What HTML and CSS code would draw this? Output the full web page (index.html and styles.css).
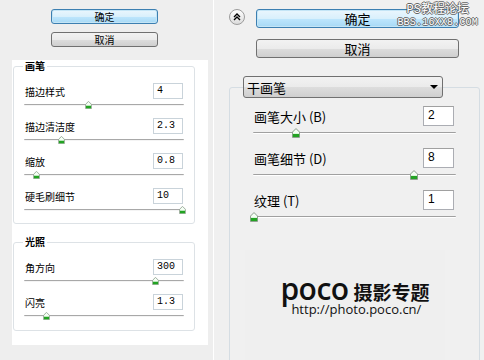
FILE: index.html
```html
<!DOCTYPE html>
<html lang="zh-CN">
<head>
    <meta charset="UTF-8">
    <title>干画笔</title>
    <link rel="stylesheet" href="styles.css">
</head>
<body>
    <svg width="0" height="0" class="defs">
        <symbol id="thumb" viewBox="0 0 9 11">
            <path d="M4.5 0.5 L8.5 4.5 V10.5 H0.5 V4.5 Z" fill="#f4fff4" stroke="#7d8f7d"/>
            <rect x="1" y="6.5" width="7" height="3.5" fill="#22a322"/>
        </symbol>
    </svg>

    <div class="left">
        <div class="btns">
            <div class="btn btn-sm btn-default">确定</div>
            <div class="btn btn-sm">取消</div>
        </div>
        <div class="sheet">
            <fieldset class="lgroup">
                <legend>画笔</legend>
                <div class="row">
                    <div class="line"><span>描边样式</span><span class="field">4</span></div>
                    <div class="slider"><svg class="knob" style="left: 40%"><use href="#thumb"/></svg></div>
                </div>
                <div class="row">
                    <div class="line"><span>描边清洁度</span><span class="field">2.3</span></div>
                    <div class="slider"><svg class="knob" style="left: 23%"><use href="#thumb"/></svg></div>
                </div>
                <div class="row">
                    <div class="line"><span>缩放</span><span class="field">0.8</span></div>
                    <div class="slider"><svg class="knob" style="left: 7.5%"><use href="#thumb"/></svg></div>
                </div>
                <div class="row">
                    <div class="line"><span>硬毛刷细节</span><span class="field">10</span></div>
                    <div class="slider"><svg class="knob" style="left: 99%"><use href="#thumb"/></svg></div>
                </div>
            </fieldset>
            <fieldset class="lgroup second">
                <legend>光照</legend>
                <div class="row">
                    <div class="line"><span>角方向</span><span class="field">300</span></div>
                    <div class="slider"><svg class="knob" style="left: 82%"><use href="#thumb"/></svg></div>
                </div>
                <div class="row">
                    <div class="line"><span>闪亮</span><span class="field">1.3</span></div>
                    <div class="slider"><svg class="knob" style="left: 14%"><use href="#thumb"/></svg></div>
                </div>
            </fieldset>
        </div>
    </div>

    <div class="right">
        <div class="top">
            <div class="collapse">
                <svg width="8" height="8" viewBox="0 0 8 8"><path d="M1 4 L4 1 L7 4 M1 7 L4 4 L7 7" fill="none" stroke="#000" stroke-width="1.4"/></svg>
            </div>
            <div class="rbtns">
                <div class="btn btn-lg btn-default">确定</div>
                <div class="btn btn-lg">取消</div>
            </div>
        </div>

        <div class="watermark">
            <div class="wm1">PS教程论坛</div>
            <div class="wm2">BBS.16XX8.COM</div>
        </div>

        <fieldset class="rgroup">
            <legend>
                <div class="select"><span>干画笔</span><span class="arrow"></span></div>
            </legend>
            <div class="rrows">
                <div class="rrow">
                    <div class="rline"><span>画笔大小 (<u>B</u>)</span><span class="rfield">2</span></div>
                    <div class="rslider"><svg class="rknob" style="left: 21%"><use href="#thumb"/></svg></div>
                </div>
                <div class="rrow">
                    <div class="rline"><span>画笔细节 (<u>D</u>)</span><span class="rfield">8</span></div>
                    <div class="rslider"><svg class="rknob" style="left: 79.5%"><use href="#thumb"/></svg></div>
                </div>
                <div class="rrow">
                    <div class="rline"><span>纹理 (<u>T</u>)</span><span class="rfield">1</span></div>
                    <div class="rslider"><svg class="rknob" style="left: 0.5%"><use href="#thumb"/></svg></div>
                </div>
            </div>
            <div class="logo-area">
                <div class="logo">
                    <div class="logo-top"><span class="poco">poco</span><span class="sy">摄影专题</span></div>
                    <div class="url">http://photo.poco.cn/</div>
                </div>
            </div>
        </fieldset>
    </div>
</body>
</html>
```

FILE: styles.css
```css
body {
    margin: 0;
    height: 360px;
    overflow: hidden;
    display: flex;
    background-color: #f0f0f0;
    font-family: "Noto Sans CJK SC", sans-serif;
    color: #000;
}
.defs {
    position: absolute;
}

/* buttons */
.btn {
    box-sizing: border-box;
    border: 1px solid #707070;
    border-radius: 3px;
    background: linear-gradient(#f2f2f2 0%, #ebebeb 50%, #dddddd 51%, #cfcfcf 100%);
    text-align: center;
}
.btn-default {
    border-color: #3c7fb1;
    background: linear-gradient(#eaf6fd 0%, #d9f0fc 50%, #bee6fd 51%, #a7d9f5 100%);
    box-shadow: inset 0 0 0 1px #c4e5f6;
}
.btn-sm {
    height: 15px;
    font-size: 10px;
    line-height: 13px;
}
.btn-lg {
    height: 19px;
    font-size: 13px;
    line-height: 17px;
}

/* left panel */
.left {
    width: 213px;
    flex-shrink: 0;
    background-color: #eeeeee;
    padding-top: 9px;
}
.btns {
    margin-left: 51px;
    width: 107px;
    display: flex;
    flex-direction: column;
    gap: 8px;
}
.sheet {
    margin: 13px 0 0 12px;
    width: 196px;
    height: 285px;
    box-sizing: border-box;
    background-color: #fff;
    padding: 0 13px 0 1px;
}
.lgroup {
    margin: 0;
    border: 1px solid #dde2e6;
    border-radius: 3px;
    padding: 11px 10px 9px 10px;
    font-size: 10px;
}
.lgroup legend {
    padding: 0 2px;
    margin-left: -1px;
    font-weight: bold;
    font-size: 10px;
    line-height: 12px;
}
.lgroup.second {
    margin-top: 12px;
    padding-bottom: 10px;
}
.row {
    margin-bottom: 9px;
}
.row:last-child {
    margin-bottom: 0;
}
.line {
    height: 16px;
    display: flex;
    justify-content: space-between;
    align-items: center;
    padding-left: 1px;
}
.field {
    box-sizing: border-box;
    width: 30px;
    height: 16px;
    border: 1px solid #c9d3da;
    font-family: "Liberation Mono", monospace;
    font-size: 10px;
    line-height: 14px;
    padding-left: 3px;
    margin-right: 1px;
}
.slider {
    position: relative;
    height: 8px;
    margin-top: 2px;
}
.slider::before {
    content: "";
    position: absolute;
    left: 0;
    right: 0;
    top: 3px;
    border-top: 1px solid #a8a8a8;
    border-bottom: 1px solid #f4f4f4;
    border-radius: 1px;
}
.knob {
    position: absolute;
    top: 0;
    width: 7px;
    height: 8px;
    margin-left: -3px;
}

/* right panel */
.right {
    flex: 1;
    position: relative;
    border-left: 1px solid #fff;
    background-color: #f0f0f0;
}
.top {
    display: flex;
    gap: 11px;
    padding: 9px 0 0 15px;
}
.collapse {
    box-sizing: border-box;
    width: 16px;
    height: 16px;
    border: 1px solid #9c9c9c;
    border-radius: 50%;
    background: linear-gradient(#ffffff, #dcdcdc);
    display: flex;
    align-items: center;
    justify-content: center;
}
.rbtns {
    width: 203px;
    display: flex;
    flex-direction: column;
    gap: 11px;
}
.watermark {
    position: absolute;
    top: 4px;
    right: 6px;
    color: #fff;
    text-align: center;
    text-shadow: 1px 0 #666, -1px 0 #666, 0 1px #666, 0 -1px #666;
}
.wm1 {
    font-size: 12px;
    line-height: 13px;
    font-family: "Liberation Mono", "Noto Sans CJK SC", monospace;
}
.wm2 {
    font-size: 10px;
    line-height: 11px;
    font-family: "Liberation Mono", monospace;
    letter-spacing: 0.2px;
}

.rgroup {
    margin: 18px 0 0 15px;
    width: 251px;
    height: 300px;
    box-sizing: border-box;
    border: 1px solid #d5dde3;
    border-radius: 3px;
    padding: 0 0 0 13px;
}
.rgroup legend {
    padding: 0;
}
.select {
    box-sizing: border-box;
    width: 200px;
    height: 22px;
    border: 1px solid #707070;
    border-radius: 3px;
    background: linear-gradient(#f2f2f2 0%, #ebebeb 50%, #dddddd 51%, #cfcfcf 100%);
    display: flex;
    align-items: center;
    justify-content: space-between;
    padding: 0 4px 0 3px;
    font-size: 13px;
}
.arrow {
    width: 0;
    height: 0;
    border-left: 4px solid transparent;
    border-right: 4px solid transparent;
    border-top: 4px solid #000;
}
.rrows {
    margin-left: 10px;
    width: 203px;
    padding-top: 8px;
}
.rrow {
    margin-bottom: 10px;
}
.rline {
    height: 20px;
    display: flex;
    justify-content: space-between;
    align-items: center;
    font-size: 13px;
    padding-left: 1px;
}
.rline u {
    text-decoration: none;
}
.rfield {
    box-sizing: border-box;
    width: 31px;
    height: 20px;
    border: 1px solid #abadb3;
    border-top-color: #a0a0a0;
    background-color: #fff;
    font-family: "Liberation Sans", sans-serif;
    font-size: 12px;
    line-height: 16px;
    padding-left: 4px;
    margin-right: 2px;
}
.rslider {
    position: relative;
    height: 10px;
    margin-top: 2px;
}
.rslider::before {
    content: "";
    position: absolute;
    left: 0;
    right: 0;
    top: 4px;
    border-top: 1px solid #a0a0a0;
    border-bottom: 1px solid #fff;
    border-radius: 1px;
}
.rknob {
    position: absolute;
    top: 0;
    width: 8px;
    height: 10px;
    margin-left: -4px;
}

/* watermark logo */
.logo-area {
    margin: 28px 0 0 2px;
    width: 200px;
    height: 110px;
    background-color: #efefef;
    display: flex;
    justify-content: center;
    padding: 29px 0 0 20px;
    box-sizing: border-box;
}
.logo {
    color: #111;
}
.logo-top {
    display: flex;
    align-items: baseline;
    height: 20px;
}
.poco {
    font-family: "Open Sans", sans-serif;
    font-weight: 600;
    font-size: 30px;
    line-height: 20px;
    letter-spacing: -0.5px;
}
.sy {
    font-weight: bold;
    font-size: 19px;
    line-height: 20px;
    margin-left: 5px;
}
.url {
    font-family: "Open Sans", sans-serif;
    font-size: 13px;
    line-height: 14px;
    margin: 3px 0 0 11px;
}
```
